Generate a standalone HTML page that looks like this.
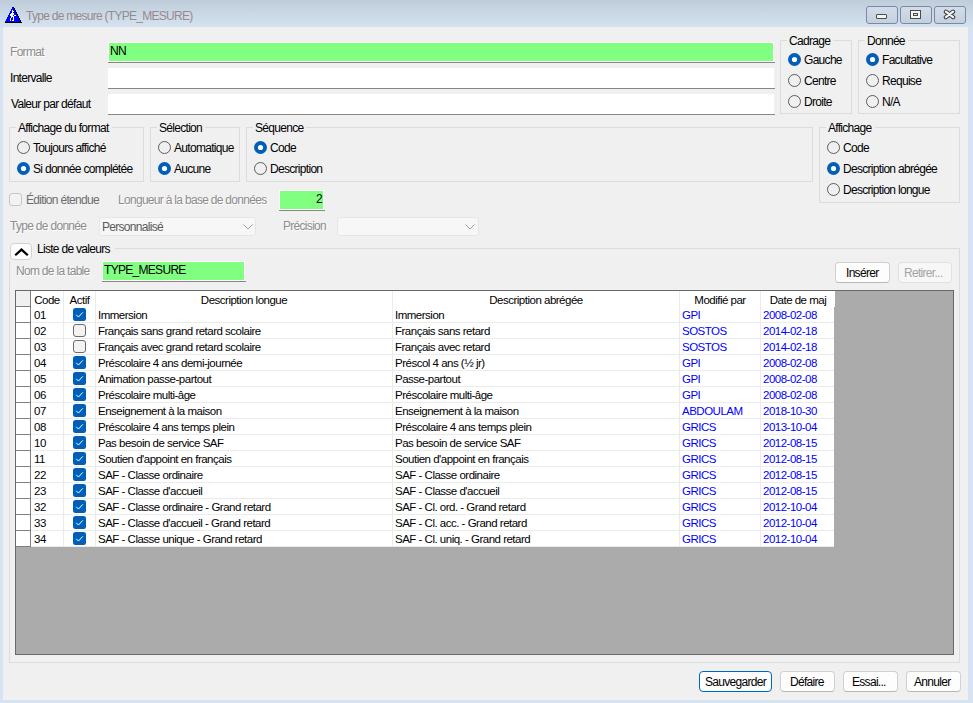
<!DOCTYPE html>
<html><head><meta charset="utf-8"><title>Type de mesure</title>
<style>
html,body{margin:0;padding:0;}
body{width:973px;height:703px;overflow:hidden;position:relative;background:#d6e3f0;font-family:'Liberation Sans', sans-serif;}
.a{position:absolute;}
.t{position:absolute;white-space:pre;line-height:14px;font-family:'Liberation Sans', sans-serif;}
</style></head><body>
<div class="a" style="left:0px;top:0px;width:973px;height:27px;background:linear-gradient(#bfcddb,#d5e2ef);"></div>
<div class="a" style="left:3px;top:27px;width:965px;height:673px;background:#f0f0f0;"></div>
<svg class="a" style="left:0px;top:0px" width="24" height="24" shape-rendering="crispEdges"><rect x="12" y="7" width="1" height="1" fill="#0000ff"/><rect x="13" y="7" width="1" height="1" fill="#000"/><rect x="12" y="8" width="2" height="1" fill="#0000ff"/><rect x="14" y="8" width="1" height="1" fill="#000"/><rect x="11" y="9" width="3" height="1" fill="#0000ff"/><rect x="14" y="9" width="1" height="1" fill="#000"/><rect x="11" y="10" width="4" height="1" fill="#0000ff"/><rect x="15" y="10" width="1" height="1" fill="#000"/><rect x="10" y="11" width="5" height="1" fill="#0000ff"/><rect x="15" y="11" width="1" height="1" fill="#000"/><rect x="10" y="12" width="6" height="1" fill="#0000ff"/><rect x="16" y="12" width="1" height="1" fill="#000"/><rect x="9" y="13" width="7" height="1" fill="#0000ff"/><rect x="16" y="13" width="1" height="1" fill="#000"/><rect x="9" y="14" width="8" height="1" fill="#0000ff"/><rect x="17" y="14" width="1" height="1" fill="#000"/><rect x="8" y="15" width="9" height="1" fill="#0000ff"/><rect x="17" y="15" width="1" height="1" fill="#000"/><rect x="8" y="16" width="10" height="1" fill="#0000ff"/><rect x="18" y="16" width="1" height="1" fill="#000"/><rect x="7" y="17" width="11" height="1" fill="#0000ff"/><rect x="18" y="17" width="1" height="1" fill="#000"/><rect x="7" y="18" width="12" height="1" fill="#0000ff"/><rect x="19" y="18" width="1" height="1" fill="#000"/><rect x="6" y="19" width="13" height="1" fill="#0000ff"/><rect x="19" y="19" width="1" height="1" fill="#000"/><rect x="6" y="20" width="14" height="1" fill="#0000ff"/><rect x="20" y="20" width="1" height="1" fill="#000"/><rect x="5" y="21" width="15" height="1" fill="#0000ff"/><rect x="20" y="21" width="1" height="1" fill="#000"/><rect x="5" y="22" width="17" height="1" fill="#000"/><rect x="12" y="10" width="1" height="1" fill="#fff"/><rect x="12" y="11" width="1" height="1" fill="#fff"/><rect x="13" y="11" width="1" height="1" fill="#fff"/><rect x="12" y="12" width="1" height="1" fill="#fff"/><rect x="11" y="13" width="1" height="1" fill="#fff"/><rect x="12" y="13" width="1" height="1" fill="#fff"/><rect x="13" y="13" width="1" height="1" fill="#fff"/><rect x="10" y="14" width="1" height="1" fill="#fff"/><rect x="11" y="14" width="1" height="1" fill="#fff"/><rect x="12" y="14" width="1" height="1" fill="#fff"/><rect x="13" y="14" width="1" height="1" fill="#fff"/><rect x="10" y="15" width="1" height="1" fill="#fff"/><rect x="11" y="15" width="1" height="1" fill="#fff"/><rect x="12" y="15" width="1" height="1" fill="#fff"/><rect x="14" y="15" width="1" height="1" fill="#fff"/><rect x="15" y="15" width="1" height="1" fill="#fff"/><rect x="11" y="16" width="1" height="1" fill="#fff"/><rect x="12" y="16" width="1" height="1" fill="#fff"/><rect x="13" y="16" width="1" height="1" fill="#fff"/><rect x="11" y="17" width="1" height="1" fill="#fff"/><rect x="13" y="17" width="1" height="1" fill="#fff"/><rect x="10" y="18" width="1" height="1" fill="#fff"/><rect x="13" y="18" width="1" height="1" fill="#fff"/><rect x="10" y="19" width="1" height="1" fill="#fff"/><rect x="13" y="19" width="1" height="1" fill="#fff"/><rect x="10" y="20" width="1" height="1" fill="#fff"/><rect x="12" y="20" width="1" height="1" fill="#fff"/><rect x="13" y="20" width="1" height="1" fill="#fff"/></svg>
<div class="t" style="left:26px;top:9px;font-size:12px;letter-spacing:-0.72px;color:#958b8c;">Type de mesure (TYPE_MESURE)</div>
<div class="a" style="left:866px;top:6px;width:32px;height:18px;border:1px solid #7a88a6;border-radius:3px;box-sizing:border-box;background:linear-gradient(#d3dde9,#c3d0de);"></div>
<div class="a" style="left:900px;top:6px;width:32px;height:18px;border:1px solid #7a88a6;border-radius:3px;box-sizing:border-box;background:linear-gradient(#d3dde9,#c3d0de);"></div>
<div class="a" style="left:934px;top:6px;width:32px;height:18px;border:1px solid #7a88a6;border-radius:3px;box-sizing:border-box;background:linear-gradient(#d3dde9,#c3d0de);"></div>
<div class="a" style="left:876px;top:14px;width:11px;height:5px;background:#f4f4f4;border:1px solid #4a4a4a;border-radius:1px;box-sizing:border-box;"></div>
<div class="a" style="left:910px;top:10px;width:11px;height:9px;background:#f4f4f4;border:1px solid #4a4a4a;box-sizing:border-box;"></div>
<div class="a" style="left:913px;top:13px;width:5px;height:3px;background:#e8e8e8;border:1px solid #4a4a4a;box-sizing:border-box;"></div>
<svg class="a" style="left:943px;top:9px" width="13" height="12" viewBox="0 0 13 12">
<path d="M2.9 2.7 L10.1 8.1 M10.1 2.7 L2.9 8.1" stroke="#3c3c44" stroke-width="4.3" stroke-linecap="round"/>
<path d="M2.9 2.7 L10.1 8.1 M10.1 2.7 L2.9 8.1" stroke="#f4f4f2" stroke-width="2.3" stroke-linecap="round"/>
</svg>
<div class="t" style="left:10px;top:45px;font-size:12px;letter-spacing:-0.7px;color:#8d8d8d;text-shadow:1px 1px 0 #fff;">Format</div>
<div class="a" style="left:108px;top:42px;width:666px;height:20px;background:#80ff80;border:1px solid #fff;box-sizing:border-box;"></div>
<div class="a" style="left:108px;top:62px;width:667px;height:1px;background:#868686;"></div>
<div class="t" style="left:110px;top:44px;font-size:12px;letter-spacing:-0.7px;color:#000;">NN</div>
<div class="t" style="left:10px;top:71px;font-size:12px;letter-spacing:-0.7px;color:#000;">Intervalle</div>
<div class="a" style="left:108px;top:68px;width:666px;height:20px;background:#fff;border:1px solid #fff;box-sizing:border-box;"></div>
<div class="a" style="left:108px;top:88px;width:667px;height:1px;background:#868686;"></div>
<div class="t" style="left:11px;top:97px;font-size:12px;letter-spacing:-0.7px;color:#000;">Valeur par défaut</div>
<div class="a" style="left:108px;top:94px;width:666px;height:20px;background:#fff;border:1px solid #fff;box-sizing:border-box;"></div>
<div class="a" style="left:108px;top:114px;width:667px;height:1px;background:#868686;"></div>
<div class="a" style="left:780px;top:40px;width:72px;height:74px;border:1px solid #dcdcdc;box-sizing:border-box;"></div>
<div class="t" style="left:787px;top:34px;font-size:12px;letter-spacing:-0.7px;color:#000;background:#f0f0f0;padding:0 3px 0 2px;">Cadrage</div>
<svg class="a" style="left:788px;top:53px" width="13" height="13"><circle cx="6.5" cy="6.5" r="6.5" fill="#005fb8"/><circle cx="6.5" cy="6.5" r="2.6" fill="#fff"/></svg>
<div class="t" style="left:804px;top:53px;font-size:12px;letter-spacing:-0.7px;color:#000;">Gauche</div>
<svg class="a" style="left:788px;top:74px" width="13" height="13"><circle cx="6.5" cy="6.5" r="6" fill="none" stroke="#5c5c5c" stroke-width="1"/></svg>
<div class="t" style="left:804px;top:74px;font-size:12px;letter-spacing:-0.7px;color:#000;">Centre</div>
<svg class="a" style="left:788px;top:95px" width="13" height="13"><circle cx="6.5" cy="6.5" r="6" fill="none" stroke="#5c5c5c" stroke-width="1"/></svg>
<div class="t" style="left:804px;top:95px;font-size:12px;letter-spacing:-0.7px;color:#000;">Droite</div>
<div class="a" style="left:858px;top:40px;width:102px;height:74px;border:1px solid #dcdcdc;box-sizing:border-box;"></div>
<div class="t" style="left:865px;top:34px;font-size:12px;letter-spacing:-0.7px;color:#000;background:#f0f0f0;padding:0 3px 0 2px;">Donnée</div>
<svg class="a" style="left:866px;top:53px" width="13" height="13"><circle cx="6.5" cy="6.5" r="6.5" fill="#005fb8"/><circle cx="6.5" cy="6.5" r="2.6" fill="#fff"/></svg>
<div class="t" style="left:882px;top:53px;font-size:12px;letter-spacing:-0.7px;color:#000;">Facultative</div>
<svg class="a" style="left:866px;top:74px" width="13" height="13"><circle cx="6.5" cy="6.5" r="6" fill="none" stroke="#5c5c5c" stroke-width="1"/></svg>
<div class="t" style="left:882px;top:74px;font-size:12px;letter-spacing:-0.7px;color:#000;">Requise</div>
<svg class="a" style="left:866px;top:95px" width="13" height="13"><circle cx="6.5" cy="6.5" r="6" fill="none" stroke="#5c5c5c" stroke-width="1"/></svg>
<div class="t" style="left:882px;top:95px;font-size:12px;letter-spacing:-0.7px;color:#000;">N/A</div>
<div class="a" style="left:9px;top:127px;width:135px;height:55px;border:1px solid #dcdcdc;box-sizing:border-box;"></div>
<div class="t" style="left:16px;top:121px;font-size:12px;letter-spacing:-0.7px;color:#000;background:#f0f0f0;padding:0 3px 0 2px;">Affichage du format</div>
<svg class="a" style="left:17px;top:141px" width="13" height="13"><circle cx="6.5" cy="6.5" r="6" fill="none" stroke="#5c5c5c" stroke-width="1"/></svg>
<div class="t" style="left:33px;top:141px;font-size:12px;letter-spacing:-0.7px;color:#000;">Toujours affiché</div>
<svg class="a" style="left:17px;top:162px" width="13" height="13"><circle cx="6.5" cy="6.5" r="6.5" fill="#005fb8"/><circle cx="6.5" cy="6.5" r="2.6" fill="#fff"/></svg>
<div class="t" style="left:33px;top:162px;font-size:12px;letter-spacing:-0.7px;color:#000;">Si donnée complétée</div>
<div class="a" style="left:150px;top:127px;width:90px;height:55px;border:1px solid #dcdcdc;box-sizing:border-box;"></div>
<div class="t" style="left:157px;top:121px;font-size:12px;letter-spacing:-0.7px;color:#000;background:#f0f0f0;padding:0 3px 0 2px;">Sélection</div>
<svg class="a" style="left:158px;top:141px" width="13" height="13"><circle cx="6.5" cy="6.5" r="6" fill="none" stroke="#5c5c5c" stroke-width="1"/></svg>
<div class="t" style="left:174px;top:141px;font-size:12px;letter-spacing:-0.7px;color:#000;">Automatique</div>
<svg class="a" style="left:158px;top:162px" width="13" height="13"><circle cx="6.5" cy="6.5" r="6.5" fill="#005fb8"/><circle cx="6.5" cy="6.5" r="2.6" fill="#fff"/></svg>
<div class="t" style="left:174px;top:162px;font-size:12px;letter-spacing:-0.7px;color:#000;">Aucune</div>
<div class="a" style="left:246px;top:127px;width:567px;height:55px;border:1px solid #dcdcdc;box-sizing:border-box;"></div>
<div class="t" style="left:253px;top:121px;font-size:12px;letter-spacing:-0.7px;color:#000;background:#f0f0f0;padding:0 3px 0 2px;">Séquence</div>
<svg class="a" style="left:254px;top:141px" width="13" height="13"><circle cx="6.5" cy="6.5" r="6.5" fill="#005fb8"/><circle cx="6.5" cy="6.5" r="2.6" fill="#fff"/></svg>
<div class="t" style="left:270px;top:141px;font-size:12px;letter-spacing:-0.7px;color:#000;">Code</div>
<svg class="a" style="left:254px;top:162px" width="13" height="13"><circle cx="6.5" cy="6.5" r="6" fill="none" stroke="#5c5c5c" stroke-width="1"/></svg>
<div class="t" style="left:270px;top:162px;font-size:12px;letter-spacing:-0.7px;color:#000;">Description</div>
<div class="a" style="left:819px;top:127px;width:141px;height:76px;border:1px solid #dcdcdc;box-sizing:border-box;"></div>
<div class="t" style="left:826px;top:121px;font-size:12px;letter-spacing:-0.7px;color:#000;background:#f0f0f0;padding:0 3px 0 2px;">Affichage</div>
<svg class="a" style="left:827px;top:141px" width="13" height="13"><circle cx="6.5" cy="6.5" r="6" fill="none" stroke="#5c5c5c" stroke-width="1"/></svg>
<div class="t" style="left:843px;top:141px;font-size:12px;letter-spacing:-0.7px;color:#000;">Code</div>
<svg class="a" style="left:827px;top:162px" width="13" height="13"><circle cx="6.5" cy="6.5" r="6.5" fill="#005fb8"/><circle cx="6.5" cy="6.5" r="2.6" fill="#fff"/></svg>
<div class="t" style="left:843px;top:162px;font-size:12px;letter-spacing:-0.7px;color:#000;">Description abrégée</div>
<svg class="a" style="left:827px;top:183px" width="13" height="13"><circle cx="6.5" cy="6.5" r="6" fill="none" stroke="#5c5c5c" stroke-width="1"/></svg>
<div class="t" style="left:843px;top:183px;font-size:12px;letter-spacing:-0.7px;color:#000;">Description longue</div>
<svg class="a" style="left:9px;top:193px" width="13" height="13"><rect x="0.5" y="0.5" width="12" height="12" rx="2.5" fill="#f3f3f3" stroke="#c6c6c6" stroke-width="1"/></svg>
<div class="t" style="left:26px;top:193px;font-size:12px;letter-spacing:-0.7px;color:#6d6d6d;">Édition étendue</div>
<div class="t" style="left:118px;top:193px;font-size:12px;letter-spacing:-0.7px;color:#8d8d8d;text-shadow:1px 1px 0 #fff;">Longueur à la base de données</div>
<div class="a" style="left:279px;top:190px;width:45px;height:20px;background:#80ff80;border:1px solid #fff;box-sizing:border-box;"></div>
<div class="a" style="left:279px;top:210px;width:46px;height:1px;background:#868686;"></div>
<div class="t" style="left:316px;top:192px;font-size:12px;letter-spacing:-0.7px;color:#000;">2</div>
<div class="t" style="left:10px;top:219px;font-size:12px;letter-spacing:-0.7px;color:#8d8d8d;text-shadow:1px 1px 0 #fff;">Type de donnée</div>
<div class="a" style="left:99px;top:217px;width:157px;height:19px;background:#f7f7f7;border:1px solid #e6e6e6;border-radius:3px;box-sizing:border-box;"></div>
<div class="t" style="left:102px;top:220px;font-size:12px;letter-spacing:-0.7px;color:#5a5a5a;">Personnalisé</div>
<svg class="a" style="left:243px;top:224px" width="10" height="6"><path d="M0.5 0.5 L5 5 L9.5 0.5" fill="none" stroke="#9c9c9c" stroke-width="1"/></svg>
<div class="t" style="left:283px;top:219px;font-size:12px;letter-spacing:-0.7px;color:#8d8d8d;text-shadow:1px 1px 0 #fff;">Précision</div>
<div class="a" style="left:337px;top:217px;width:142px;height:19px;background:#f7f7f7;border:1px solid #e6e6e6;border-radius:3px;box-sizing:border-box;"></div>
<svg class="a" style="left:465px;top:224px" width="10" height="6"><path d="M0.5 0.5 L5 5 L9.5 0.5" fill="none" stroke="#9c9c9c" stroke-width="1"/></svg>
<div class="a" style="left:9px;top:248px;width:951px;height:415px;border:1px solid #dcdcdc;box-sizing:border-box;"></div>
<div class="a" style="left:8px;top:238px;width:107px;height:23px;background:#f0f0f0;"></div>
<div class="a" style="left:10px;top:243px;width:22px;height:17px;background:#fdfdfd;border:1px solid #d2d2d2;border-radius:4px;box-sizing:border-box;"></div>
<svg class="a" style="left:14px;top:247px" width="15" height="10"><path d="M1.2 8.3 L7.5 2.6 L13.8 8.3" fill="none" stroke="#000" stroke-width="2.2"/></svg>
<div class="t" style="left:37px;top:242px;font-size:12px;letter-spacing:-0.7px;color:#000;">Liste de valeurs</div>
<div class="t" style="left:16px;top:264px;font-size:12px;letter-spacing:-0.7px;color:#8d8d8d;text-shadow:1px 1px 0 #fff;">Nom de la table</div>
<div class="a" style="left:102px;top:261px;width:143px;height:20px;background:#80ff80;border:1px solid #fff;box-sizing:border-box;"></div>
<div class="a" style="left:102px;top:281px;width:144px;height:1px;background:#868686;"></div>
<div class="t" style="left:104px;top:263px;font-size:12px;letter-spacing:-0.7px;color:#000;">TYPE_MESURE</div>
<div class="a" style="left:835px;top:262px;width:55px;height:21px;border:1px solid #d0d0d0;border-bottom-color:#b8b8b8;background:#fdfdfd;border-radius:4px;box-sizing:border-box;"></div>
<div class="t" style="left:846px;top:266px;font-size:12px;letter-spacing:-0.7px;color:#000;">Insérer</div>
<div class="a" style="left:898px;top:262px;width:54px;height:21px;border:1px solid #e1e1e1;background:#f7f7f7;border-radius:4px;box-sizing:border-box;"></div>
<div class="t" style="left:904px;top:266px;font-size:12px;letter-spacing:-0.7px;color:#a3a3a3;">Retirer...</div>
<div class="a" style="left:15px;top:290px;width:939px;height:365px;background:#ababab;border:1px solid #696969;box-sizing:border-box;"></div>
<div class="a" style="left:16px;top:291px;width:818px;height:256px;background:#fff;"></div>
<div class="a" style="left:16px;top:291px;width:819px;height:16px;background:#fff;"></div>
<div class="a" style="left:16px;top:291px;width:14px;height:15px;background:#f0f0f0;"></div>
<div class="a" style="left:30px;top:291px;width:1px;height:256px;background:#7f7f7f;"></div>
<div class="a" style="left:16px;top:306px;width:14px;height:1px;background:#7f7f7f;"></div>
<div class="a" style="left:16px;top:322px;width:14px;height:1px;background:#7f7f7f;"></div>
<div class="a" style="left:31px;top:322px;width:803px;height:1px;background:#ebebeb;"></div>
<div class="a" style="left:16px;top:338px;width:14px;height:1px;background:#7f7f7f;"></div>
<div class="a" style="left:31px;top:338px;width:803px;height:1px;background:#ebebeb;"></div>
<div class="a" style="left:16px;top:354px;width:14px;height:1px;background:#7f7f7f;"></div>
<div class="a" style="left:31px;top:354px;width:803px;height:1px;background:#ebebeb;"></div>
<div class="a" style="left:16px;top:370px;width:14px;height:1px;background:#7f7f7f;"></div>
<div class="a" style="left:31px;top:370px;width:803px;height:1px;background:#ebebeb;"></div>
<div class="a" style="left:16px;top:386px;width:14px;height:1px;background:#7f7f7f;"></div>
<div class="a" style="left:31px;top:386px;width:803px;height:1px;background:#ebebeb;"></div>
<div class="a" style="left:16px;top:402px;width:14px;height:1px;background:#7f7f7f;"></div>
<div class="a" style="left:31px;top:402px;width:803px;height:1px;background:#ebebeb;"></div>
<div class="a" style="left:16px;top:418px;width:14px;height:1px;background:#7f7f7f;"></div>
<div class="a" style="left:31px;top:418px;width:803px;height:1px;background:#ebebeb;"></div>
<div class="a" style="left:16px;top:434px;width:14px;height:1px;background:#7f7f7f;"></div>
<div class="a" style="left:31px;top:434px;width:803px;height:1px;background:#ebebeb;"></div>
<div class="a" style="left:16px;top:450px;width:14px;height:1px;background:#7f7f7f;"></div>
<div class="a" style="left:31px;top:450px;width:803px;height:1px;background:#ebebeb;"></div>
<div class="a" style="left:16px;top:466px;width:14px;height:1px;background:#7f7f7f;"></div>
<div class="a" style="left:31px;top:466px;width:803px;height:1px;background:#ebebeb;"></div>
<div class="a" style="left:16px;top:482px;width:14px;height:1px;background:#7f7f7f;"></div>
<div class="a" style="left:31px;top:482px;width:803px;height:1px;background:#ebebeb;"></div>
<div class="a" style="left:16px;top:498px;width:14px;height:1px;background:#7f7f7f;"></div>
<div class="a" style="left:31px;top:498px;width:803px;height:1px;background:#ebebeb;"></div>
<div class="a" style="left:16px;top:514px;width:14px;height:1px;background:#7f7f7f;"></div>
<div class="a" style="left:31px;top:514px;width:803px;height:1px;background:#ebebeb;"></div>
<div class="a" style="left:16px;top:530px;width:14px;height:1px;background:#7f7f7f;"></div>
<div class="a" style="left:31px;top:530px;width:803px;height:1px;background:#ebebeb;"></div>
<div class="a" style="left:16px;top:546px;width:14px;height:1px;background:#7f7f7f;"></div>
<div class="a" style="left:31px;top:546px;width:803px;height:1px;background:#ebebeb;"></div>
<div class="a" style="left:63px;top:291px;width:1px;height:256px;background:#ebebeb;"></div>
<div class="a" style="left:95px;top:291px;width:1px;height:256px;background:#ebebeb;"></div>
<div class="a" style="left:392px;top:291px;width:1px;height:256px;background:#ebebeb;"></div>
<div class="a" style="left:679px;top:291px;width:1px;height:256px;background:#ebebeb;"></div>
<div class="a" style="left:760px;top:291px;width:1px;height:256px;background:#ebebeb;"></div>
<div class="t" style="left:31px;top:293px;width:32px;text-align:center;font-size:11.5px;letter-spacing:-0.5px;color:#000">Code</div>
<div class="t" style="left:64px;top:293px;width:31px;text-align:center;font-size:11.5px;letter-spacing:-0.5px;color:#000">Actif</div>
<div class="t" style="left:96px;top:293px;width:296px;text-align:center;font-size:11.5px;letter-spacing:-0.5px;color:#000">Description longue</div>
<div class="t" style="left:393px;top:293px;width:286px;text-align:center;font-size:11.5px;letter-spacing:-0.5px;color:#000">Description abrégée</div>
<div class="t" style="left:680px;top:293px;width:80px;text-align:center;font-size:11.5px;letter-spacing:-0.5px;color:#000">Modifié par</div>
<div class="t" style="left:761px;top:293px;width:74px;text-align:center;font-size:11.5px;letter-spacing:-0.5px;color:#000">Date de maj</div>
<div class="t" style="left:34px;top:308px;font-size:11.5px;letter-spacing:-0.5px;color:#000;">01</div>
<svg class="a" style="left:73px;top:308px" width="13" height="13"><rect x="0" y="0" width="13" height="13" rx="2.5" fill="#005fb8"/><path d="M3.2 6.8 L5.4 9 L9.8 4.4" fill="none" stroke="#fff" stroke-width="1"/></svg>
<div class="t" style="left:98px;top:308px;font-size:11.5px;letter-spacing:-0.5px;color:#000;">Immersion</div>
<div class="t" style="left:395px;top:308px;font-size:11.5px;letter-spacing:-0.5px;color:#000;">Immersion</div>
<div class="t" style="left:682px;top:308px;font-size:11.5px;letter-spacing:-0.5px;color:#0000ff;">GPI</div>
<div class="t" style="left:763px;top:308px;font-size:11.5px;letter-spacing:-0.5px;color:#0000ff;">2008-02-08</div>
<div class="t" style="left:34px;top:324px;font-size:11.5px;letter-spacing:-0.5px;color:#000;">02</div>
<svg class="a" style="left:73px;top:324px" width="13" height="13"><rect x="0.5" y="0.5" width="12" height="12" rx="2.5" fill="#f3f3f3" stroke="#6b6b6b" stroke-width="1"/></svg>
<div class="t" style="left:98px;top:324px;font-size:11.5px;letter-spacing:-0.5px;color:#000;">Français sans grand retard scolaire</div>
<div class="t" style="left:395px;top:324px;font-size:11.5px;letter-spacing:-0.5px;color:#000;">Français sans retard</div>
<div class="t" style="left:682px;top:324px;font-size:11.5px;letter-spacing:-0.5px;color:#0000ff;">SOSTOS</div>
<div class="t" style="left:763px;top:324px;font-size:11.5px;letter-spacing:-0.5px;color:#0000ff;">2014-02-18</div>
<div class="t" style="left:34px;top:340px;font-size:11.5px;letter-spacing:-0.5px;color:#000;">03</div>
<svg class="a" style="left:73px;top:340px" width="13" height="13"><rect x="0.5" y="0.5" width="12" height="12" rx="2.5" fill="#f3f3f3" stroke="#6b6b6b" stroke-width="1"/></svg>
<div class="t" style="left:98px;top:340px;font-size:11.5px;letter-spacing:-0.5px;color:#000;">Français avec grand retard scolaire</div>
<div class="t" style="left:395px;top:340px;font-size:11.5px;letter-spacing:-0.5px;color:#000;">Français avec retard</div>
<div class="t" style="left:682px;top:340px;font-size:11.5px;letter-spacing:-0.5px;color:#0000ff;">SOSTOS</div>
<div class="t" style="left:763px;top:340px;font-size:11.5px;letter-spacing:-0.5px;color:#0000ff;">2014-02-18</div>
<div class="t" style="left:34px;top:356px;font-size:11.5px;letter-spacing:-0.5px;color:#000;">04</div>
<svg class="a" style="left:73px;top:356px" width="13" height="13"><rect x="0" y="0" width="13" height="13" rx="2.5" fill="#005fb8"/><path d="M3.2 6.8 L5.4 9 L9.8 4.4" fill="none" stroke="#fff" stroke-width="1"/></svg>
<div class="t" style="left:98px;top:356px;font-size:11.5px;letter-spacing:-0.5px;color:#000;">Préscolaire 4 ans demi-journée</div>
<div class="t" style="left:395px;top:356px;font-size:11.5px;letter-spacing:-0.5px;color:#000;">Préscol 4 ans (½ jr)</div>
<div class="t" style="left:682px;top:356px;font-size:11.5px;letter-spacing:-0.5px;color:#0000ff;">GPI</div>
<div class="t" style="left:763px;top:356px;font-size:11.5px;letter-spacing:-0.5px;color:#0000ff;">2008-02-08</div>
<div class="t" style="left:34px;top:372px;font-size:11.5px;letter-spacing:-0.5px;color:#000;">05</div>
<svg class="a" style="left:73px;top:372px" width="13" height="13"><rect x="0" y="0" width="13" height="13" rx="2.5" fill="#005fb8"/><path d="M3.2 6.8 L5.4 9 L9.8 4.4" fill="none" stroke="#fff" stroke-width="1"/></svg>
<div class="t" style="left:98px;top:372px;font-size:11.5px;letter-spacing:-0.5px;color:#000;">Animation passe-partout</div>
<div class="t" style="left:395px;top:372px;font-size:11.5px;letter-spacing:-0.5px;color:#000;">Passe-partout</div>
<div class="t" style="left:682px;top:372px;font-size:11.5px;letter-spacing:-0.5px;color:#0000ff;">GPI</div>
<div class="t" style="left:763px;top:372px;font-size:11.5px;letter-spacing:-0.5px;color:#0000ff;">2008-02-08</div>
<div class="t" style="left:34px;top:388px;font-size:11.5px;letter-spacing:-0.5px;color:#000;">06</div>
<svg class="a" style="left:73px;top:388px" width="13" height="13"><rect x="0" y="0" width="13" height="13" rx="2.5" fill="#005fb8"/><path d="M3.2 6.8 L5.4 9 L9.8 4.4" fill="none" stroke="#fff" stroke-width="1"/></svg>
<div class="t" style="left:98px;top:388px;font-size:11.5px;letter-spacing:-0.5px;color:#000;">Préscolaire multi-âge</div>
<div class="t" style="left:395px;top:388px;font-size:11.5px;letter-spacing:-0.5px;color:#000;">Préscolaire multi-âge</div>
<div class="t" style="left:682px;top:388px;font-size:11.5px;letter-spacing:-0.5px;color:#0000ff;">GPI</div>
<div class="t" style="left:763px;top:388px;font-size:11.5px;letter-spacing:-0.5px;color:#0000ff;">2008-02-08</div>
<div class="t" style="left:34px;top:404px;font-size:11.5px;letter-spacing:-0.5px;color:#000;">07</div>
<svg class="a" style="left:73px;top:404px" width="13" height="13"><rect x="0" y="0" width="13" height="13" rx="2.5" fill="#005fb8"/><path d="M3.2 6.8 L5.4 9 L9.8 4.4" fill="none" stroke="#fff" stroke-width="1"/></svg>
<div class="t" style="left:98px;top:404px;font-size:11.5px;letter-spacing:-0.5px;color:#000;">Enseignement à la maison</div>
<div class="t" style="left:395px;top:404px;font-size:11.5px;letter-spacing:-0.5px;color:#000;">Enseignement à la maison</div>
<div class="t" style="left:682px;top:404px;font-size:11.5px;letter-spacing:-0.5px;color:#0000ff;">ABDOULAM</div>
<div class="t" style="left:763px;top:404px;font-size:11.5px;letter-spacing:-0.5px;color:#0000ff;">2018-10-30</div>
<div class="t" style="left:34px;top:420px;font-size:11.5px;letter-spacing:-0.5px;color:#000;">08</div>
<svg class="a" style="left:73px;top:420px" width="13" height="13"><rect x="0" y="0" width="13" height="13" rx="2.5" fill="#005fb8"/><path d="M3.2 6.8 L5.4 9 L9.8 4.4" fill="none" stroke="#fff" stroke-width="1"/></svg>
<div class="t" style="left:98px;top:420px;font-size:11.5px;letter-spacing:-0.5px;color:#000;">Préscolaire 4 ans temps plein</div>
<div class="t" style="left:395px;top:420px;font-size:11.5px;letter-spacing:-0.5px;color:#000;">Préscolaire 4 ans temps plein</div>
<div class="t" style="left:682px;top:420px;font-size:11.5px;letter-spacing:-0.5px;color:#0000ff;">GRICS</div>
<div class="t" style="left:763px;top:420px;font-size:11.5px;letter-spacing:-0.5px;color:#0000ff;">2013-10-04</div>
<div class="t" style="left:34px;top:436px;font-size:11.5px;letter-spacing:-0.5px;color:#000;">10</div>
<svg class="a" style="left:73px;top:436px" width="13" height="13"><rect x="0" y="0" width="13" height="13" rx="2.5" fill="#005fb8"/><path d="M3.2 6.8 L5.4 9 L9.8 4.4" fill="none" stroke="#fff" stroke-width="1"/></svg>
<div class="t" style="left:98px;top:436px;font-size:11.5px;letter-spacing:-0.5px;color:#000;">Pas besoin de service SAF</div>
<div class="t" style="left:395px;top:436px;font-size:11.5px;letter-spacing:-0.5px;color:#000;">Pas besoin de service SAF</div>
<div class="t" style="left:682px;top:436px;font-size:11.5px;letter-spacing:-0.5px;color:#0000ff;">GRICS</div>
<div class="t" style="left:763px;top:436px;font-size:11.5px;letter-spacing:-0.5px;color:#0000ff;">2012-08-15</div>
<div class="t" style="left:34px;top:452px;font-size:11.5px;letter-spacing:-0.5px;color:#000;">11</div>
<svg class="a" style="left:73px;top:452px" width="13" height="13"><rect x="0" y="0" width="13" height="13" rx="2.5" fill="#005fb8"/><path d="M3.2 6.8 L5.4 9 L9.8 4.4" fill="none" stroke="#fff" stroke-width="1"/></svg>
<div class="t" style="left:98px;top:452px;font-size:11.5px;letter-spacing:-0.5px;color:#000;">Soutien d'appoint en français</div>
<div class="t" style="left:395px;top:452px;font-size:11.5px;letter-spacing:-0.5px;color:#000;">Soutien d'appoint en français</div>
<div class="t" style="left:682px;top:452px;font-size:11.5px;letter-spacing:-0.5px;color:#0000ff;">GRICS</div>
<div class="t" style="left:763px;top:452px;font-size:11.5px;letter-spacing:-0.5px;color:#0000ff;">2012-08-15</div>
<div class="t" style="left:34px;top:468px;font-size:11.5px;letter-spacing:-0.5px;color:#000;">22</div>
<svg class="a" style="left:73px;top:468px" width="13" height="13"><rect x="0" y="0" width="13" height="13" rx="2.5" fill="#005fb8"/><path d="M3.2 6.8 L5.4 9 L9.8 4.4" fill="none" stroke="#fff" stroke-width="1"/></svg>
<div class="t" style="left:98px;top:468px;font-size:11.5px;letter-spacing:-0.5px;color:#000;">SAF - Classe ordinaire</div>
<div class="t" style="left:395px;top:468px;font-size:11.5px;letter-spacing:-0.5px;color:#000;">SAF - Classe ordinaire</div>
<div class="t" style="left:682px;top:468px;font-size:11.5px;letter-spacing:-0.5px;color:#0000ff;">GRICS</div>
<div class="t" style="left:763px;top:468px;font-size:11.5px;letter-spacing:-0.5px;color:#0000ff;">2012-08-15</div>
<div class="t" style="left:34px;top:484px;font-size:11.5px;letter-spacing:-0.5px;color:#000;">23</div>
<svg class="a" style="left:73px;top:484px" width="13" height="13"><rect x="0" y="0" width="13" height="13" rx="2.5" fill="#005fb8"/><path d="M3.2 6.8 L5.4 9 L9.8 4.4" fill="none" stroke="#fff" stroke-width="1"/></svg>
<div class="t" style="left:98px;top:484px;font-size:11.5px;letter-spacing:-0.5px;color:#000;">SAF - Classe d'accueil</div>
<div class="t" style="left:395px;top:484px;font-size:11.5px;letter-spacing:-0.5px;color:#000;">SAF - Classe d'accueil</div>
<div class="t" style="left:682px;top:484px;font-size:11.5px;letter-spacing:-0.5px;color:#0000ff;">GRICS</div>
<div class="t" style="left:763px;top:484px;font-size:11.5px;letter-spacing:-0.5px;color:#0000ff;">2012-08-15</div>
<div class="t" style="left:34px;top:500px;font-size:11.5px;letter-spacing:-0.5px;color:#000;">32</div>
<svg class="a" style="left:73px;top:500px" width="13" height="13"><rect x="0" y="0" width="13" height="13" rx="2.5" fill="#005fb8"/><path d="M3.2 6.8 L5.4 9 L9.8 4.4" fill="none" stroke="#fff" stroke-width="1"/></svg>
<div class="t" style="left:98px;top:500px;font-size:11.5px;letter-spacing:-0.5px;color:#000;">SAF - Classe ordinaire - Grand retard</div>
<div class="t" style="left:395px;top:500px;font-size:11.5px;letter-spacing:-0.5px;color:#000;">SAF - Cl. ord. - Grand retard</div>
<div class="t" style="left:682px;top:500px;font-size:11.5px;letter-spacing:-0.5px;color:#0000ff;">GRICS</div>
<div class="t" style="left:763px;top:500px;font-size:11.5px;letter-spacing:-0.5px;color:#0000ff;">2012-10-04</div>
<div class="t" style="left:34px;top:516px;font-size:11.5px;letter-spacing:-0.5px;color:#000;">33</div>
<svg class="a" style="left:73px;top:516px" width="13" height="13"><rect x="0" y="0" width="13" height="13" rx="2.5" fill="#005fb8"/><path d="M3.2 6.8 L5.4 9 L9.8 4.4" fill="none" stroke="#fff" stroke-width="1"/></svg>
<div class="t" style="left:98px;top:516px;font-size:11.5px;letter-spacing:-0.5px;color:#000;">SAF - Classe d'accueil - Grand retard</div>
<div class="t" style="left:395px;top:516px;font-size:11.5px;letter-spacing:-0.5px;color:#000;">SAF - Cl. acc. - Grand retard</div>
<div class="t" style="left:682px;top:516px;font-size:11.5px;letter-spacing:-0.5px;color:#0000ff;">GRICS</div>
<div class="t" style="left:763px;top:516px;font-size:11.5px;letter-spacing:-0.5px;color:#0000ff;">2012-10-04</div>
<div class="t" style="left:34px;top:532px;font-size:11.5px;letter-spacing:-0.5px;color:#000;">34</div>
<svg class="a" style="left:73px;top:532px" width="13" height="13"><rect x="0" y="0" width="13" height="13" rx="2.5" fill="#005fb8"/><path d="M3.2 6.8 L5.4 9 L9.8 4.4" fill="none" stroke="#fff" stroke-width="1"/></svg>
<div class="t" style="left:98px;top:532px;font-size:11.5px;letter-spacing:-0.5px;color:#000;">SAF - Classe unique - Grand retard</div>
<div class="t" style="left:395px;top:532px;font-size:11.5px;letter-spacing:-0.5px;color:#000;">SAF - Cl. uniq. - Grand retard</div>
<div class="t" style="left:682px;top:532px;font-size:11.5px;letter-spacing:-0.5px;color:#0000ff;">GRICS</div>
<div class="t" style="left:763px;top:532px;font-size:11.5px;letter-spacing:-0.5px;color:#0000ff;">2012-10-04</div>
<div class="a" style="left:699px;top:671px;width:73px;height:21px;border:1px solid #0067c0;background:#fdfdfd;border-radius:4px;box-sizing:border-box;"></div>
<div class="t" style="left:705px;top:675px;font-size:12px;letter-spacing:-0.7px;color:#000;">Sauvegarder</div>
<div class="a" style="left:780px;top:671px;width:55px;height:21px;border:1px solid #d0d0d0;border-bottom-color:#b8b8b8;background:#fdfdfd;border-radius:4px;box-sizing:border-box;"></div>
<div class="t" style="left:790px;top:675px;font-size:12px;letter-spacing:-0.7px;color:#000;">Défaire</div>
<div class="a" style="left:843px;top:671px;width:55px;height:21px;border:1px solid #d0d0d0;border-bottom-color:#b8b8b8;background:#fdfdfd;border-radius:4px;box-sizing:border-box;"></div>
<div class="t" style="left:852px;top:675px;font-size:12px;letter-spacing:-0.7px;color:#000;">Essai...</div>
<div class="a" style="left:906px;top:671px;width:55px;height:21px;border:1px solid #d0d0d0;border-bottom-color:#b8b8b8;background:#fdfdfd;border-radius:4px;box-sizing:border-box;"></div>
<div class="t" style="left:914px;top:675px;font-size:12px;letter-spacing:-0.7px;color:#000;">Annuler</div>
</body></html>
